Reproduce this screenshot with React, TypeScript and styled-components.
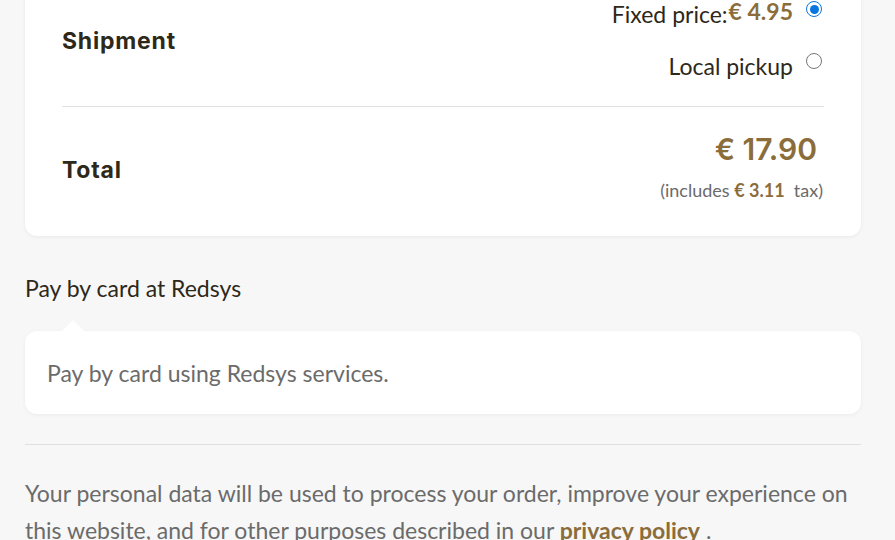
import React from "react";
import styled, { createGlobalStyle } from "styled-components";

const Global = createGlobalStyle`
  html, body { margin: 0; padding: 0; background: #f7f7f7; }
  body { font-family: Lato, "Open Sans", sans-serif; overflow: hidden; }
`;

const gold = "#8a6d3b";

const Page = styled.div`
  width: 895px;
  height: 540px;
  overflow: hidden;
  box-sizing: border-box;
  padding: 0 34px 0 25px;
`;

const Card = styled.div`
  margin-top: -20px;
  background: #fff;
  border-radius: 12px;
  box-shadow: 0 1px 4px rgba(0, 0, 0, 0.06);
  padding: 0 37px 0 37px;
`;

const Row = styled.div<{ $h: number; $divider?: boolean }>`
  display: flex;
  align-items: center;
  justify-content: space-between;
  height: ${(p) => p.$h}px;
  border-bottom: ${(p) => (p.$divider ? "1px solid #e2e2e2" : "none")};
`;

const Label = styled.div`
  font-family: Inter, "Noto Sans", sans-serif;
  font-weight: 700;
  font-size: 23px;
  color: #2e2819;
  letter-spacing: 0.8px;
  margin-top: -4px;
`;

const Options = styled.div`
  display: flex;
  flex-direction: column;
  align-items: flex-end;
  gap: 26px;
  margin-top: -6px;
`;

const Option = styled.label`
  display: flex;
  align-items: flex-start;
  gap: 13px;
  font-size: 23px;
  line-height: 26px;
  color: #2e2819;
`;

const Radio = styled.span<{ $checked?: boolean }>`
  width: 16px;
  height: 16px;
  margin-right: 2px;
  border-radius: 50%;
  box-sizing: border-box;
  border: ${(p) => (p.$checked ? "1.5px solid #0b74de" : "1.5px solid #767676")};
  background: #fff;
  display: flex;
  align-items: center;
  justify-content: center;
  &::after {
    content: "";
    width: 9px;
    height: 9px;
    border-radius: 50%;
    background: ${(p) => (p.$checked ? "#0b74de" : "transparent")};
  }
`;

const OptPrice = styled.span`
  color: ${gold};
  font-weight: 700;
  margin-left: 1px;
  position: relative;
  top: -3px;
`;

const TotalBlock = styled.div`
  display: flex;
  flex-direction: column;
  align-items: flex-end;
  margin-top: -12px;
`;

const TotalPrice = styled.div`
  font-family: Inter, "Noto Sans", sans-serif;
  font-weight: 600;
  font-size: 30px;
  color: ${gold};
  margin-right: 7px;
`;

const Tax = styled.div`
  font-size: 18px;
  color: #6b6b6b;
  margin-top: 12px;
  margin-right: 1px;
  b { color: ${gold}; font-weight: 700; }
`;

const MethodTitle = styled.div`
  margin-top: 38px;
  font-size: 23px;
  color: #2e2819;
`;

const MethodBox = styled.div`
  position: relative;
  margin-top: 29px;
  background: #fff;
  border-radius: 12px;
  box-shadow: 0 1px 4px rgba(0, 0, 0, 0.05);
  height: 83px;
  display: flex;
  align-items: center;
  padding: 0 22px;
  font-size: 23px;
  color: #6b6b6b;
  &::before {
    content: "";
    position: absolute;
    left: 37px;
    top: -11px;
    border-left: 11px solid transparent;
    border-right: 11px solid transparent;
    border-bottom: 11px solid #fff;
  }
`;

const Divider = styled.hr`
  border: none;
  border-top: 1px solid #e0e0e0;
  margin: 30px 0 0;
`;

const Privacy = styled.p`
  margin: 30px 0 0;
  font-size: 23px;
  line-height: 37px;
  color: #6b6b6b;
  a { color: ${gold}; font-weight: 700; text-decoration: none; }
`;

export default function App() {
  return (
    <>
      <Global />
      <Page>
        <Card>
          <Row $h={126} $divider>
            <Label>Shipment</Label>
            <Options>
              <Option>
                <span>
                  Fixed price:<OptPrice>€ 4.95</OptPrice>
                </span>
                <Radio $checked />
              </Option>
              <Option>
                <span>Local pickup</span>
                <Radio />
              </Option>
            </Options>
          </Row>
          <Row $h={129}>
            <Label>Total</Label>
            <TotalBlock>
              <TotalPrice>€ 17.90</TotalPrice>
              <Tax>
                (includes <b>€ 3.11</b>&nbsp; tax)
              </Tax>
            </TotalBlock>
          </Row>
        </Card>
        <MethodTitle>Pay by card at Redsys</MethodTitle>
        <MethodBox>Pay by card using Redsys services.</MethodBox>
        <Divider />
        <Privacy>
          Your personal data will be used to process your order, improve your experience on this website, and
          for other purposes described in our <a href="#">privacy policy</a> .
        </Privacy>
      </Page>
    </>
  );
}
